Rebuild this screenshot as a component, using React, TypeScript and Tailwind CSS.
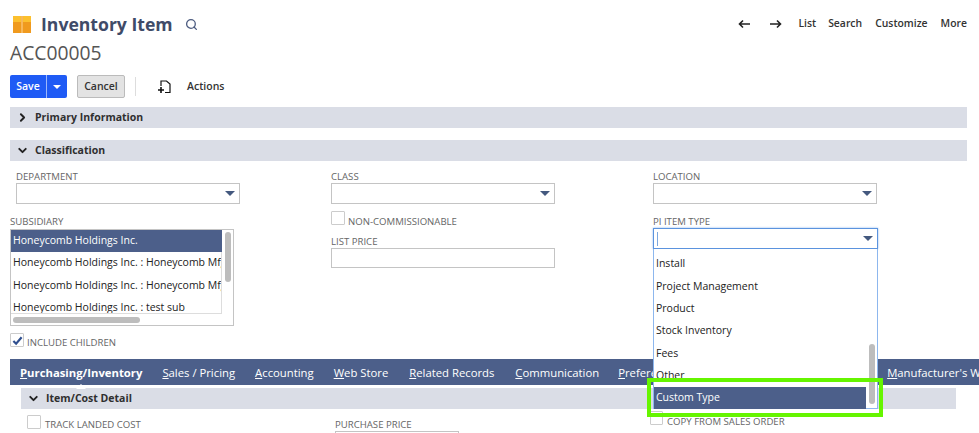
import { ReactNode } from 'react';
import { ChevronDown, ChevronRight, Search } from 'lucide-react';

function Caret() {
  return <span className="h-0 w-0 border-x-[5px] border-t-[5px] border-x-transparent border-t-[#44597f]" />;
}

function Label({ children, className = '' }: { children: ReactNode; className?: string }) {
  return <div className={'h-[14px] whitespace-nowrap text-[9.6px] leading-[16px] text-[#666] ' + className}>{children}</div>;
}

function SelectBox() {
  return (
    <div className="flex h-[21px] w-[224px] items-center justify-end border border-[#c4c4c4] bg-white pr-[4px]">
      <Caret />
    </div>
  );
}

function Checkbox({ checked = false }: { checked?: boolean }) {
  return (
    <span className="flex h-[14px] w-[14px] shrink-0 items-center justify-center rounded-[1px] border border-[#ccc] bg-white">
      {checked && (
        <svg viewBox="0 0 12 12" className="h-[11px] w-[11px]">
          <path d="M1.5 6.5 4.5 9.5 10.5 2.5" fill="none" stroke="#2f4f8f" strokeWidth="2.4" />
        </svg>
      )}
    </span>
  );
}

function SectionBar({ title, open, className = '' }: { title: string; open?: boolean; className?: string }) {
  return (
    <div className={'flex h-[21px] items-center bg-[#dadde6] text-[10.5px] font-bold text-[#2f2f2f] ' + className}>
      <span className="flex w-[25px] shrink-0 justify-center">
        {open ? <ChevronDown size={13} strokeWidth={3.5} className="text-[#222]" /> : <ChevronRight size={13} strokeWidth={3.5} className="text-[#222]" />}
      </span>
      {title}
    </div>
  );
}

function Tab({ first, rest, className = '' }: { first: string; rest: string; className?: string }) {
  return (
    <span className={'whitespace-nowrap ' + className}>
      <span className="underline">{first}</span>
      {rest}
    </span>
  );
}

const subsidiaries = ['Honeycomb Holdings Inc. : Honeycomb Mfg', 'Honeycomb Holdings Inc. : Honeycomb Mfg', 'Honeycomb Holdings Inc. : test sub'];
const itemTypes = ['Install', 'Project Management', 'Product', 'Stock Inventory', 'Fees', 'Other'];

export default function App() {
  return (
    <div className="relative h-[433px] w-[979px] overflow-hidden bg-white font-['Open_Sans',sans-serif] text-[#333]">
      <div className="flex h-[40px] items-center pl-[13px] pr-[12px] pt-[8px]">
        <svg viewBox="0 0 18 17" className="h-[17px] w-[18px]">
          <rect width="18" height="6" fill="#fcc02e" />
          <rect y="6" width="18" height="11" fill="#f09a1e" />
          <rect x="8" width="2" height="17" fill="#f7b75a" />
        </svg>
        <span className="ml-[10px] text-[17.6px] font-bold text-[#3f4b68]">Inventory Item</span>
        <Search size={13} strokeWidth={2.4} className="ml-[12px] text-[#4d5c80]" />
        <div className="ml-auto flex items-center text-[10.4px] font-semibold text-[#333]">
          <svg viewBox="0 0 12 10" className="h-[10px] w-[12px]">
            <path d="M12 5H2M5 1.5 1.5 5 5 8.5" fill="none" stroke="#222" strokeWidth="1.6" />
          </svg>
          <svg viewBox="0 0 12 10" className="ml-[20px] h-[10px] w-[12px]">
            <path d="M0 5h10M7 1.5 10.5 5 7 8.5" fill="none" stroke="#222" strokeWidth="1.6" />
          </svg>
          <span className="ml-[16px]">List</span>
          <span className="ml-[12px]">Search</span>
          <span className="ml-[13px]">Customize</span>
          <span className="ml-[13px]">More</span>
        </div>
      </div>

      <div className="pl-[10px] text-[19.3px] leading-[26px] text-[#555]">ACC00005</div>

      <div className="mt-[9px] flex h-[23px] items-center pl-[10px]">
        <div className="flex h-[23px] overflow-hidden rounded-[2px] bg-[#1f5bf5] text-[10.5px] font-semibold text-white">
          <span className="flex w-[36px] items-center justify-center">Save</span>
          <span className="flex w-[21px] items-center justify-center border-l border-[#9db8fb]">
            <span className="h-0 w-0 border-x-[4px] border-t-[4px] border-x-transparent border-t-white" />
          </span>
        </div>
        <span className="ml-[10px] flex h-[23px] w-[48px] items-center justify-center rounded-[2px] border border-[#bbb] bg-[#e3e3e3] text-[10.5px] font-semibold">Cancel</span>
        <span className="ml-[10px] h-[19px] w-px bg-[#ddd]" />
        <svg viewBox="0 0 14 14" className="ml-[22px] h-[14px] w-[14px]">
          <path d="M3 6V1h5.5L12 4v8.5H7" fill="none" stroke="#111" strokeWidth="1.2" />
          <path d="M0 10h6M3 7v6" fill="none" stroke="#111" strokeWidth="1.6" />
        </svg>
        <span className="ml-[15px] text-[10.5px] font-semibold">Actions</span>
      </div>

      <SectionBar title="Primary Information" className="ml-[10px] mr-[12px] mt-[9px]" />
      <SectionBar title="Classification" open className="ml-[10px] mr-[12px] mt-[12px]" />

      <div className="flex h-[198px] pl-[10px] pt-[8px]">
        <div className="w-[321px]">
          <div className="pl-[6px]">
            <Label>DEPARTMENT</Label>
            <SelectBox />
          </div>
          <Label className="mt-[10px]">SUBSIDIARY</Label>
          <div className="relative mt-[1px] h-[97px] w-[224px] overflow-hidden border border-[#c4c4c4] bg-white text-[10.5px]">
            <div className="flex h-[22px] w-[211px] items-center bg-[#4c5f8a] pl-[2px] text-white">Honeycomb Holdings Inc.</div>
            <div className="h-[62px] w-[211px] overflow-hidden border-r border-b border-[#ddd]">
              {subsidiaries.map((s, i) => (
                <div key={i} className="flex h-[22.5px] items-center overflow-hidden whitespace-nowrap pl-[2px] text-[#222]">{s}</div>
              ))}
            </div>
            <span className="absolute right-[2px] top-[2px] h-[50px] w-[6px] rounded-full bg-[#bdbdbd]" />
            <span className="absolute bottom-[2px] left-[2px] h-[6px] w-[127px] rounded-full bg-[#bdbdbd]" />
          </div>
          <div className="mt-[7px] flex items-start gap-[3px]">
            <Checkbox checked />
            <Label className="mt-[2px]">INCLUDE CHILDREN</Label>
          </div>
        </div>

        <div className="w-[322px]">
          <Label>CLASS</Label>
          <SelectBox />
          <div className="mt-[7px] flex items-start gap-[3px]">
            <Checkbox />
            <Label className="mt-[3px]">NON-COMMISSIONABLE</Label>
          </div>
          <Label className="mt-[6px]">LIST PRICE</Label>
          <div className="h-[20px] w-[224px] border border-[#c4c4c4] bg-white" />
        </div>

        <div>
          <Label>LOCATION</Label>
          <SelectBox />
          <Label className="mt-[10px]">PI ITEM TYPE</Label>
        </div>
      </div>

      <div className="ml-[10px] flex h-[26px] items-center bg-[#4c5f8a] pl-[10px] pt-[2px] text-[11.3px] text-white">
        <span className="relative font-bold">
          <span className="underline">P</span>urchasing/Inventory
          <span className="absolute -bottom-[8px] left-1/2 h-0 w-0 -translate-x-1/2 border-x-[5px] border-b-[5px] border-x-transparent border-b-white" />
        </span>
        <Tab first="S" rest="ales / Pricing" className="ml-[20px]" />
        <Tab first="A" rest="ccounting" className="ml-[20px]" />
        <Tab first="W" rest="eb Store" className="ml-[20px]" />
        <Tab first="R" rest="elated Records" className="ml-[21px]" />
        <Tab first="C" rest="ommunication" className="ml-[21px]" />
        <Tab first="P" rest="references" className="ml-[19px]" />
        <Tab first="M" rest="anufacturer's Warranty" className="ml-[206px]" />
      </div>

      <SectionBar title="Item/Cost Detail" open className="ml-[21px] mr-[23px] mt-[3px]" />

      <div className="flex items-start pl-[27px] pt-[6px]">
        <div className="flex w-[308px] items-start gap-[4px]">
          <Checkbox />
          <Label className="mt-[2px]">TRACK LANDED COST</Label>
        </div>
        <div className="pt-[2px]">
          <Label>PURCHASE PRICE</Label>
          <div className="h-[20px] w-[124px] border border-[#c4c4c4] bg-white" />
        </div>
      </div>

      {/* open dropdown and the annotation on top of it */}
      <div className="absolute left-[650px] top-[411px] flex items-start gap-[4px]">
        <span className="h-[14px] w-[13px] rounded-[1px] border border-[#ccc] bg-white" />
        <Label className="mt-[3px]">COPY FROM SALES ORDER</Label>
      </div>
      <div className="absolute left-[653px] top-[228px] w-[225px]">
        <div className="flex h-[21px] items-center justify-between border border-[#5b93de] bg-white pl-[3px] pr-[4px] shadow-[0_0_2px_#8db7ee]">
          <span className="h-[14px] w-px bg-[#7ba7e0]" />
          <Caret />
        </div>
        <div className="relative h-[160px] border-x border-b border-[#8db7ee] bg-white text-[10.5px] text-[#222]">
          <div className="pt-[4px]">
            {itemTypes.map((t) => (
              <div key={t} className="flex h-[22.4px] items-center pl-[2px]">{t}</div>
            ))}
            <div className="flex h-[22px] w-[212px] items-center bg-[#4c5f8a] pl-[2px] text-white">Custom Type</div>
          </div>
          <span className="absolute right-[2px] top-[95px] h-[60px] w-[6px] rounded-full bg-[#bdbdbd]" />
        </div>
      </div>
      <div className="absolute left-[647px] top-[378px] h-[39px] w-[236px] border-4 border-[#66f500]" />
    </div>
  );
}
